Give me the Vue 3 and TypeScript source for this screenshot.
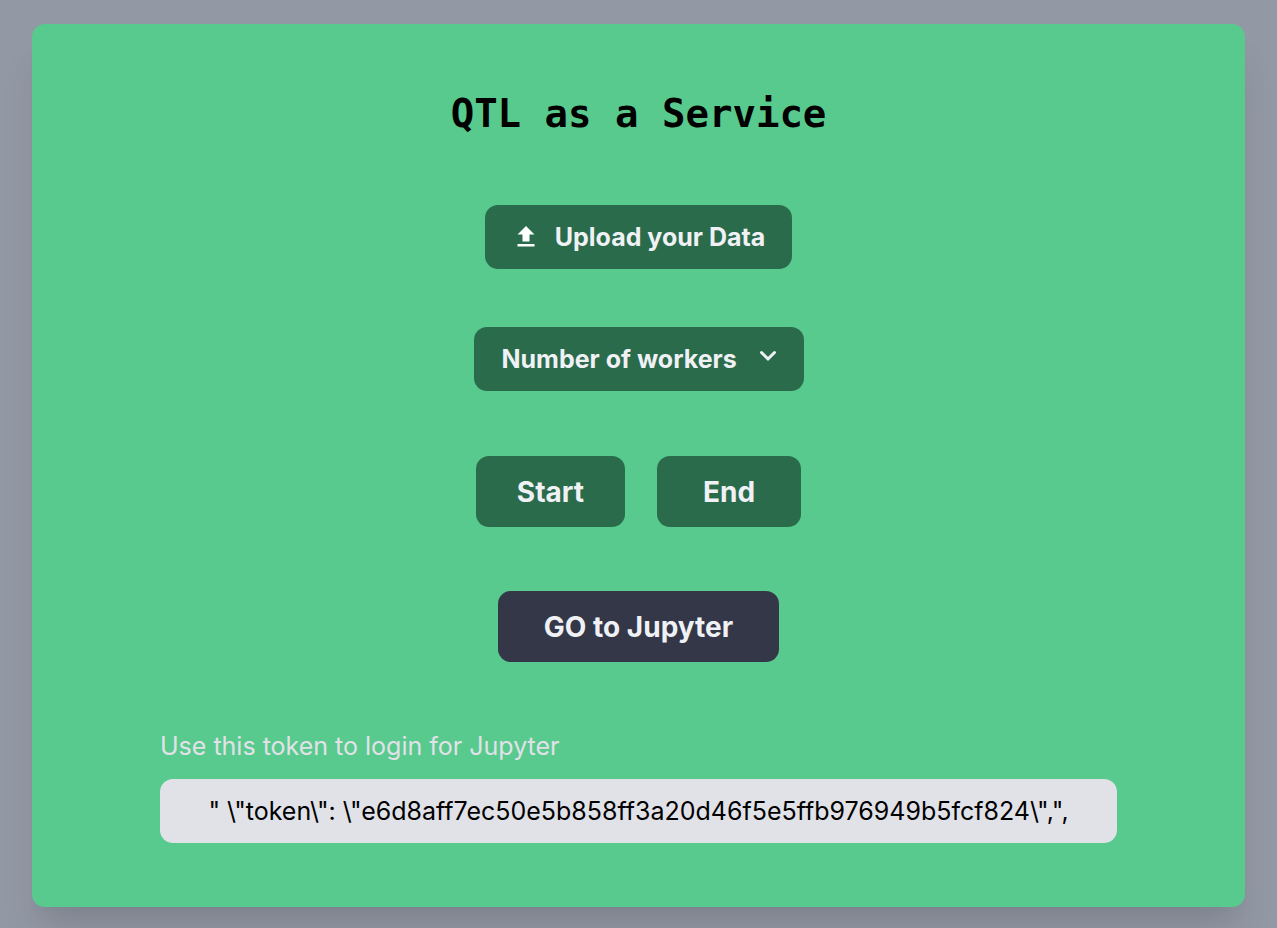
<script setup lang="ts">
import { ref } from 'vue'

const workerOptions: number[] = [1, 2, 4, 8]
const workers = ref<string>('')
const token = ref<string>('" \\"token\\": \\"e6d8aff7ec50e5b858ff3a20d46f5e5ffb976949b5fcf824\\",",')
const fileInput = ref<HTMLInputElement | null>(null)
const running = ref<boolean>(false)

function chooseFile(): void {
  fileInput.value?.click()
}
</script>

<template>
  <main class="page">
    <section class="card">
      <h1 class="title">QTL as a Service</h1>

      <button class="btn btn-md upload" type="button" @click="chooseFile">
        <svg class="upload-icon" viewBox="0 0 18 22" aria-hidden="true">
          <path d="M9 0 17.5 8.5H12.5V15.5H5.5V8.5H0.5ZM0.5 18H17.5V20.5H0.5Z" fill="#fff" />
        </svg>
        Upload your Data
      </button>
      <input ref="fileInput" type="file" hidden aria-label="Data file" />

      <div class="workers">
        <select v-model="workers" class="btn workers-select" aria-label="Number of workers">
          <option value="">Number of workers</option>
          <option v-for="n in workerOptions" :key="n" :value="String(n)">{{ n }}</option>
        </select>
        <svg class="chevron" viewBox="0 0 18 12" aria-hidden="true">
          <path d="M2.5 2.5 9 9 15.5 2.5" fill="none" stroke="#f0f1f5" stroke-width="3" stroke-linecap="round" />
        </svg>
      </div>

      <div class="actions">
        <button class="btn btn-lg start" type="button" @click="running = true">Start</button>
        <button class="btn btn-lg end" type="button" @click="running = false">End</button>
      </div>

      <a class="btn btn-lg jupyter" href="#jupyter">GO to Jupyter</a>

      <div class="field">
        <label class="field-label" for="token">Use this token to login for Jupyter</label>
        <input id="token" class="field-input" type="text" readonly :value="token" />
      </div>
    </section>
  </main>
</template>

<style>
body {
  margin: 0;
  background: #9298a4;
}
</style>

<style scoped>
.page {
  box-sizing: border-box;
  min-height: 100vh;
  padding: 24px 32px 21px;
  overflow: hidden;
  background: #9298a4;
  font-family: Inter, "Liberation Sans", sans-serif;
}

.card {
  box-sizing: border-box;
  display: flex;
  flex-direction: column;
  align-items: center;
  padding: 64px 128px;
  border-radius: 13px;
  background: #58ca8d;
  box-shadow: 0 32px 40px -8px rgba(0, 0, 0, 0.1), 0 16px 16px -8px rgba(0, 0, 0, 0.04);
}

.title {
  margin: 0 0 65px;
  font: bold 39px/52px "DejaVu Sans Mono", "Liberation Mono", monospace;
  color: #000;
}

.btn {
  box-sizing: border-box;
  display: inline-flex;
  align-items: center;
  justify-content: center;
  border: 0;
  border-radius: 13px;
  background: #2a6b4c;
  color: #f0f1f5;
  font-family: inherit;
  font-weight: 700;
  text-decoration: none;
  cursor: pointer;
}

.btn-md {
  height: 64px;
  padding: 0 27px 0 32px;
  font-size: 25px;
}

.upload {
  gap: 20px;
  margin-bottom: 58px;
}

.upload-icon {
  width: 18px;
  height: 22px;
}

.workers {
  display: grid;
  align-items: center;
  margin-bottom: 65px;
}

.workers-select {
  grid-area: 1 / 1;
  height: 64px;
  padding: 0 66px 0 28px;
  appearance: none;
  font-size: 25px;
}

.chevron {
  grid-area: 1 / 1;
  justify-self: end;
  width: 18px;
  height: 12px;
  margin: 0 27px 6px 0;
  pointer-events: none;
}

.actions {
  display: flex;
  gap: 32px;
  margin-bottom: 64px;
}

.btn-lg {
  height: 71px;
  font-size: 28px;
}

.start {
  padding: 0 41px;
}

.end {
  padding: 0 46px;
}

.jupyter {
  padding: 0 46px;
  margin-bottom: 65px;
  background: #333748;
}

.field {
  display: flex;
  flex-direction: column;
  align-self: stretch;
  gap: 13px;
}

.field-label {
  font-size: 25px;
  line-height: 39px;
  color: #e1e2e8;
}

.field-input {
  box-sizing: border-box;
  width: 100%;
  height: 64px;
  padding: 0 26px;
  border: 0;
  border-radius: 13px;
  background: #e1e2e8;
  color: #000;
  font-family: inherit;
  font-size: 25px;
  text-align: center;
}
</style>
